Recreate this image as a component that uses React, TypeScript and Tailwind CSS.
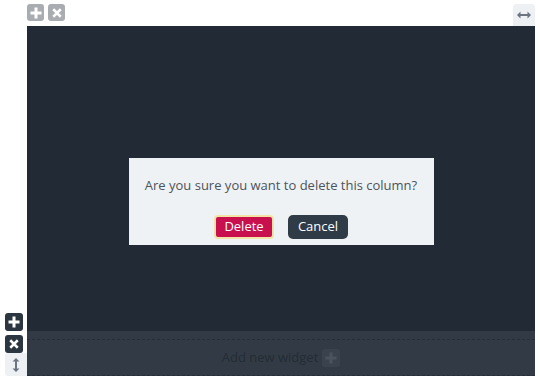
import React from 'react';

const font = { fontFamily: '"Open Sans", "Noto Sans", sans-serif' };

function PlusGlyph({ className }: { className?: string }) {
  return (
    <svg viewBox="0 0 12 12" className={className}>
      <path d="M6 0.5v11M0.5 6h11" stroke="currentColor" strokeWidth="3" strokeLinecap="butt" />
    </svg>
  );
}

function CrossGlyph({ className }: { className?: string }) {
  return (
    <svg viewBox="0 0 12 12" className={className}>
      <path d="M1.5 1.5l9 9M10.5 1.5l-9 9" stroke="currentColor" strokeWidth="3" strokeLinecap="butt" />
    </svg>
  );
}

function HArrow() {
  return (
    <svg viewBox="0 0 14 8" className="w-[14px] h-[8px]">
      <path d="M2 4h10" stroke="#6b7480" strokeWidth="2" />
      <path d="M0 4l3.5-3.5v7z M14 4l-3.5-3.5v7z" fill="#6b7480" />
    </svg>
  );
}

function VArrow() {
  return (
    <svg viewBox="0 0 8 14" className="w-[8px] h-[14px]">
      <path d="M4 2v10" stroke="#6b7480" strokeWidth="2" />
      <path d="M4 0l-3.5 3.5h7z M4 14l-3.5-3.5h7z" fill="#6b7480" />
    </svg>
  );
}

export default function App() {
  return (
    <div className="w-[540px] h-[389px] bg-white overflow-hidden" style={font}>
      {/* Top toolbar */}
      <div className="flex h-[26px] pt-[4px] pl-[27px] pr-[5px]">
        <div className="flex gap-[4px]">
          <button className="w-[17px] h-[17px] rounded-[3px] bg-[#a9adb2] text-white flex items-center justify-center">
            <PlusGlyph className="w-[12px] h-[12px]" />
          </button>
          <button className="w-[17px] h-[17px] rounded-[3px] bg-[#a9adb2] text-white flex items-center justify-center">
            <CrossGlyph className="w-[10px] h-[10px]" />
          </button>
        </div>
        <div className="ml-auto w-[22px] h-[22px] bg-[#eef1f4] rounded-t-[3px] flex items-center justify-center">
          <HArrow />
        </div>
      </div>

      <div className="flex h-[350px]">
        {/* Left controls */}
        <div className="w-[27px] pl-[5px] flex flex-col justify-end">
          <button className="w-[18px] h-[18px] rounded-[3px] bg-[#2c3640] text-white flex items-center justify-center">
            <PlusGlyph className="w-[12px] h-[12px]" />
          </button>
          <button className="mt-[4px] w-[18px] h-[18px] rounded-[3px] bg-[#2c3640] text-white flex items-center justify-center">
            <CrossGlyph className="w-[10px] h-[10px]" />
          </button>
          <div className="h-[23px] w-[22px] bg-[#eef1f4] rounded-l-[3px] flex items-center justify-center">
            <VArrow />
          </div>
        </div>

        {/* Column */}
        <div className="relative w-[508px] bg-[#222b35] flex flex-col">
          <div className="flex-1" />
          <div className="h-[45px] bg-[#323b45] pt-[8px]">
            <div className="h-[37px] border-t border-b border-dashed border-[#262e38] flex items-center justify-center gap-[4px]">
              <span className="text-[13px] text-[#232b34]">Add new widget</span>
              <span className="w-[18px] h-[18px] rounded-[3px] bg-[#3a434d] text-[#4b545e] flex items-center justify-center">
                <PlusGlyph className="w-[12px] h-[12px]" />
              </span>
            </div>
          </div>

          {/* Confirm dialog */}
          <div className="absolute inset-0 flex items-center justify-center">
            <div className="w-[305px] h-[87px] bg-[#eff2f5] flex flex-col items-center pt-[18px]">
              <p className="text-[13px] text-[#4d535a] leading-[18px]">Are you sure you want to delete this column?</p>
              <div className="flex gap-[14px] mt-[21px]">
                <button className="w-[60px] h-[24px] rounded-[4px] bg-[#c8104f] border-2 border-[#f4e3a6] text-white text-[13px] leading-none">
                  Delete
                </button>
                <button className="w-[60px] h-[24px] rounded-[5px] bg-[#2f3b47] text-white text-[13px] leading-none">
                  Cancel
                </button>
              </div>
            </div>
          </div>
        </div>
      </div>
    </div>
  );
}
